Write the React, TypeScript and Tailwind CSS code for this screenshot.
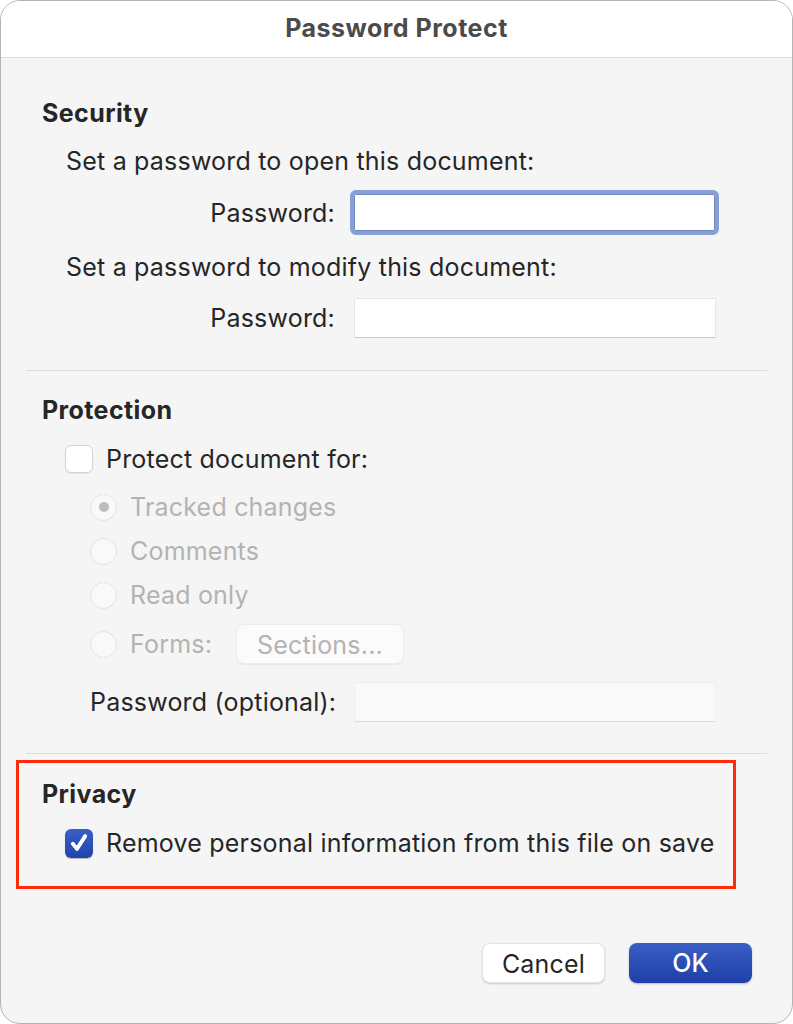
import type { ReactNode } from "react";

const font = { fontFamily: "Inter, 'Noto Sans', sans-serif" };

function Heading({ children }: { children: ReactNode }) {
  return (
    <div className="flex h-[30px] items-center pl-[41px] text-[25px] font-bold tracking-[0.4px] text-[#262626]">
      {children}
    </div>
  );
}

function Checkbox({ checked = false }: { checked?: boolean }) {
  if (checked) {
    return (
      <span className="flex h-[29px] w-[28px] items-center justify-center rounded-[6px] bg-gradient-to-b from-[#3b5fc6] to-[#2143ad] shadow-[0_1px_1px_rgba(0,0,0,0.25)]">
        <svg viewBox="0 0 16 16" className="h-[22px] w-[22px]" fill="none" stroke="white" strokeWidth="2.8" strokeLinecap="round" strokeLinejoin="round">
          <path d="M3.5 8.5l3 3.8L12.5 3" />
        </svg>
      </span>
    );
  }
  return (
    <span className="h-[28px] w-[28px] rounded-[6px] border border-[#d2d2d2] bg-white shadow-[0_1px_1px_rgba(0,0,0,0.06)]" />
  );
}

function Radio({ label, selected = false }: { label: string; selected?: boolean }) {
  return (
    <div className="flex h-[30px] items-center pl-[89px]">
      <span className="flex h-[27px] w-[27px] items-center justify-center rounded-full border border-[#e3e3e3] bg-[#f9f9f9]">
        {selected && <span className="h-[10px] w-[10px] rounded-full bg-[#bdbdbd]" />}
      </span>
      <span className="ml-[13px] pt-[2px] text-[25px] tracking-[0.2px] text-[#b3b3b3]">{label}</span>
    </div>
  );
}

function Input({ focused = false, disabled = false }: { focused?: boolean; disabled?: boolean }) {
  if (focused) {
    return (
      <div className="h-[45px] w-[369px] rounded-[6px] border-[4px] border-[#86a0d6] bg-white shadow-[inset_0_0_0_1px_#6d88c4]" />
    );
  }
  return (
    <div
      className={`h-[40px] w-[362px] border ${
        disabled ? "border-[#efefef] border-b-[#dedede] bg-[#f9f9f9]" : "border-[#e6e6e6] border-b-[#c9c9c9] bg-white"
      }`}
    />
  );
}

const body = "pt-[2px] text-[25px] tracking-[0.2px] text-[#262626]";

export default function App() {
  return (
    <div style={font} className="h-[1024px] w-[793px] overflow-hidden rounded-[20px] border border-[#b4b4b4] bg-[#f5f5f5]">
      <div className="flex h-[57px] items-center justify-center border-b border-[#dddddd] bg-white text-[25px] font-bold tracking-[0.5px] text-[#4b4b4b]">
        Password Protect
      </div>

      <div className="pt-[41px]">
        <Heading>Security</Heading>
        <div className={`mt-[17px] flex h-[30px] items-center pl-[65px] ${body}`}>
          Set a password to open this document:
        </div>
        <div className="mt-[14px] flex h-[45px] items-center">
          <span className={`w-[334px] text-right ${body}`}>Password:</span>
          <span className="ml-[15px]">
            <Input focused />
          </span>
        </div>
        <div className={`mt-[17px] flex h-[30px] items-center pl-[65px] ${body}`}>
          Set a password to modify this document:
        </div>
        <div className="mt-[16px] flex h-[40px] items-center">
          <span className={`w-[334px] text-right ${body}`}>Password:</span>
          <span className="ml-[19px]">
            <Input />
          </span>
        </div>

        <div className="mx-[25px] mt-[32px] h-px bg-[#dcdcdc]" />

        <div className="mt-[25px]">
          <Heading>Protection</Heading>
        </div>
        <div className="mt-[18px] flex h-[30px] items-center pl-[64px]">
          <Checkbox />
          <span className={`ml-[13px] ${body}`}>Protect document for:</span>
        </div>
        <div className="mt-[18px] flex flex-col gap-[14px]">
          <Radio label="Tracked changes" selected />
          <Radio label="Comments" />
          <Radio label="Read only" />
        </div>
        <div className="mt-[14px] flex h-[40px] items-center pl-[89px]">
          <span className="h-[27px] w-[27px] rounded-full border border-[#e3e3e3] bg-[#f9f9f9]" />
          <span className="ml-[13px] w-[106px] pt-[2px] text-[25px] tracking-[0.2px] text-[#b3b3b3]">Forms:</span>
          <button className="h-[40px] w-[168px] rounded-[8px] border border-[#ececec] bg-[#fbfbfb] pt-[2px] text-[25px] tracking-[0.2px] text-[#b3b3b3] shadow-[0_1px_1px_rgba(0,0,0,0.06)]">
            Sections...
          </button>
        </div>
        <div className="mt-[18px] flex h-[40px] items-center">
          <span className={`w-[353px] pl-[89px] ${body}`}>Password (optional):</span>
          <Input disabled />
        </div>

        <div className="mx-[25px] mt-[31px] h-px bg-[#dcdcdc]" />

        <div className="ml-[15px] mt-[6px] h-[129px] w-[720px] border-[3px] border-[#ff2a0a] pt-[17px]">
          <div className="-ml-[18px]">
            <Heading>Privacy</Heading>
            <div className="mt-[18px] flex h-[30px] items-center pl-[64px]">
              <Checkbox checked />
              <span className={`ml-[13px] ${body}`}>
                Remove personal information from this file on save
              </span>
            </div>
          </div>
        </div>

        <div className="mr-[40px] mt-[54px] flex justify-end gap-[24px]">
          <button className={`h-[40px] w-[123px] rounded-[8px] border border-[#e4e4e4] bg-white shadow-[0_1px_2px_rgba(0,0,0,0.18)] ${body}`}>
            Cancel
          </button>
          <button className="h-[40px] w-[123px] rounded-[8px] bg-gradient-to-b from-[#3a5fc4] to-[#1f3ea9] pt-[2px] text-[25px] font-medium text-white shadow-[0_1px_2px_rgba(0,0,0,0.25)]">
            OK
          </button>
        </div>
      </div>
    </div>
  );
}
